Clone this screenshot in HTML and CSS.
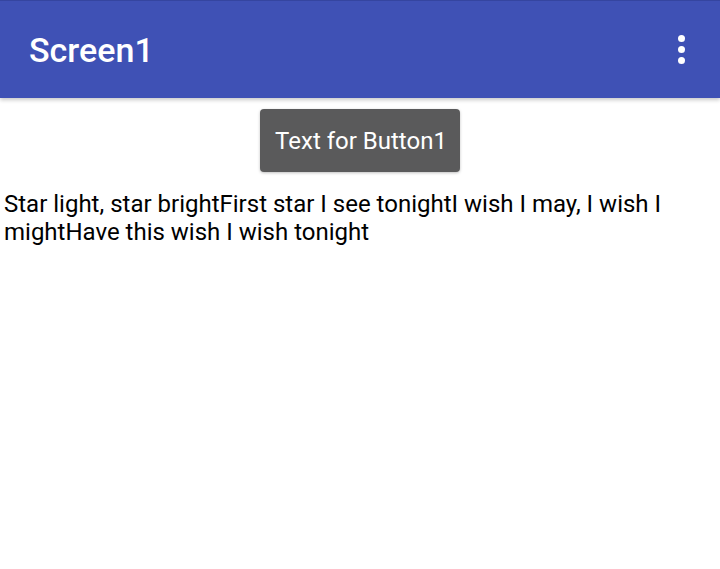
FILE: index.html
```html
<!DOCTYPE html>
<html>
<head>
<meta charset="utf-8">
<link rel="stylesheet" href="styles.css">
</head>
<body>
<header class="appbar">
  <h1 class="title">Screen1</h1>
  <div class="menu" aria-label="More options">
    <span class="dot"></span><span class="dot"></span><span class="dot"></span>
  </div>
</header>
<main class="content">
  <div class="btn-row">
    <button class="btn">Text for Button1</button>
  </div>
  <p class="label">Star light, star brightFirst star I see tonightI wish I may, I wish I mightHave this wish I wish tonight</p>
</main>
</body>
</html>
```
FILE: styles.css
```css
html, body {
  margin: 0;
  padding: 0;
  background: #ffffff;
  font-family: Roboto, "Noto Sans", sans-serif;
}
.appbar {
  height: 98px;
  background: #3f51b5;
  border-top: 1px solid #3545a0;
  box-sizing: border-box;
  display: flex;
  align-items: center;
  justify-content: space-between;
  padding: 0 35px 0 29px;
  box-shadow: 0 2px 4px rgba(0,0,0,0.22);
  position: relative;
}
.title {
  margin: 0;
  color: #ffffff;
  font-weight: 500;
  font-size: 34px;
  line-height: 1;
}
.menu {
  display: flex;
  flex-direction: column;
  gap: 4px;
}
.dot {
  width: 7px;
  height: 7px;
  border-radius: 50%;
  background: #ffffff;
}
.content {
  padding: 11px 0 0 0;
}
.btn-row {
  display: flex;
  justify-content: center;
}
.btn {
  width: 200px;
  height: 63px;
  background: #5a5a5b;
  color: #ffffff;
  border: none;
  border-radius: 4px;
  font-family: Roboto, sans-serif;
  font-size: 24px;
  box-shadow: 0 1px 3px rgba(0,0,0,0.25);
  padding: 0 0 0 2px;
}
.label {
  margin: 18px 0 0 4px;
  font-size: 24px;
  line-height: 28px;
  color: #000000;
}
```
